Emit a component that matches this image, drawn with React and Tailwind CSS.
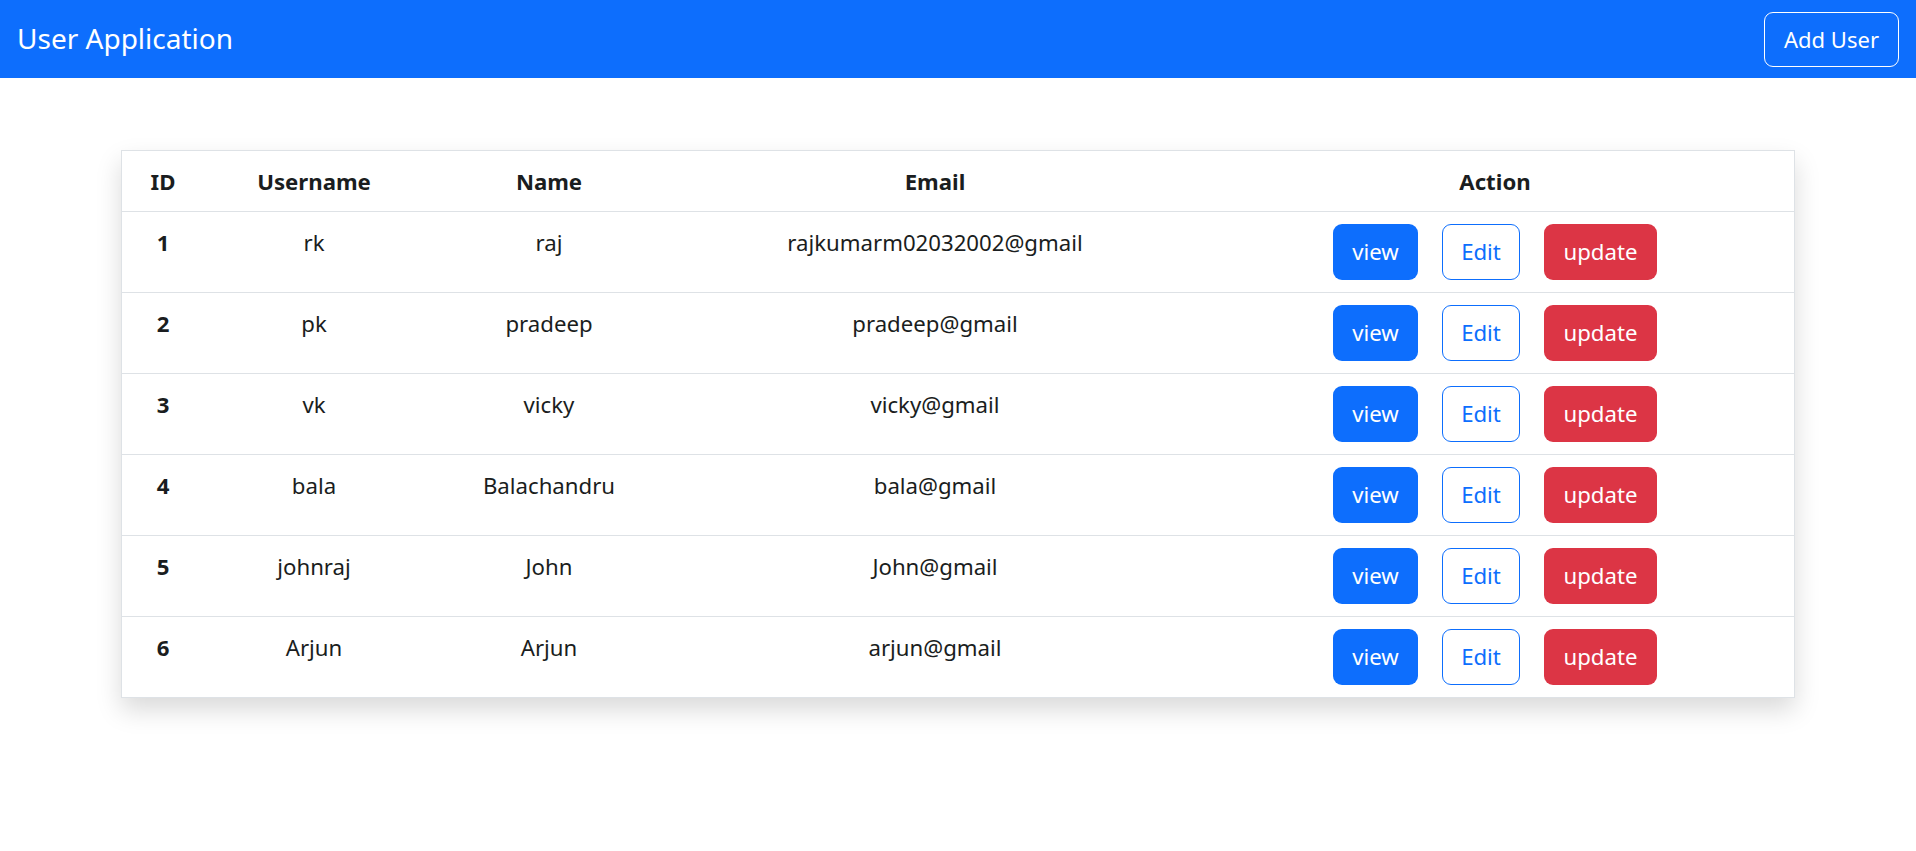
const users = [
  { id: 1, username: 'rk', name: 'raj', email: 'rajkumarm02032002@gmail' },
  { id: 2, username: 'pk', name: 'pradeep', email: 'pradeep@gmail' },
  { id: 3, username: 'vk', name: 'vicky', email: 'vicky@gmail' },
  { id: 4, username: 'bala', name: 'Balachandru', email: 'bala@gmail' },
  { id: 5, username: 'johnraj', name: 'John', email: 'John@gmail' },
  { id: 6, username: 'Arjun', name: 'Arjun', email: 'arjun@gmail' },
];

const App = () => {
  return (
    <div className="min-h-screen bg-white font-['Noto_Sans',sans-serif] text-[#1a1d20]">
      {/* Navbar */}
      <nav className="h-[78px] bg-[#0d6efd] flex items-center justify-between pl-[17px] pr-[17px]">
        <span className="text-white text-[28px] leading-none -mt-[2px]">User Application</span>
        <button className="w-[135px] h-[55px] rounded-[9px] border border-white text-white text-[22px]">
          Add User
        </button>
      </nav>

      {/* Users table */}
      <div className="w-[1674px] mx-auto mt-[72px] border border-[#dee2e6] bg-white shadow-[0_12px_24px_rgba(0,0,0,0.15)]">
        <table className="w-full table-fixed border-collapse text-center text-[22.2px]">
          <colgroup>
            <col className="w-[82px]" />
            <col className="w-[220px]" />
            <col className="w-[250px]" />
            <col className="w-[522px]" />
            <col />
          </colgroup>
          <thead>
            <tr className="border-b border-[#dee2e6]">
              <th className="h-[60px] pt-[2px] align-middle font-bold leading-[36px]">ID</th>
              <th className="pt-[2px] align-middle font-bold">Username</th>
              <th className="pt-[2px] align-middle font-bold">Name</th>
              <th className="pt-[2px] align-middle font-bold">Email</th>
              <th className="pt-[2px] align-middle font-bold">Action</th>
            </tr>
          </thead>
          <tbody>
            {users.map((u, i) => (
              <tr key={u.id} className={i < users.length - 1 ? 'border-b border-[#dee2e6]' : ''}>
                <td className="align-top pt-[13px] leading-[36px] font-bold">{u.id}</td>
                <td className="align-top pt-[13px] leading-[36px]">{u.username}</td>
                <td className="align-top pt-[13px] leading-[36px]">{u.name}</td>
                <td className="align-top pt-[13px] leading-[36px]">{u.email}</td>
                <td className="align-top py-[12px]">
                  <div className="flex justify-center gap-[24px]">
                    <button className="w-[85px] h-[56px] rounded-[9px] bg-[#0d6efd] text-white">view</button>
                    <button className="w-[78px] h-[56px] rounded-[9px] border border-[#0d6efd] text-[#0d6efd]">Edit</button>
                    <button className="w-[113px] h-[56px] rounded-[9px] bg-[#dc3545] text-white">update</button>
                  </div>
                </td>
              </tr>
            ))}
          </tbody>
        </table>
      </div>
    </div>
  );
};

export default App;
